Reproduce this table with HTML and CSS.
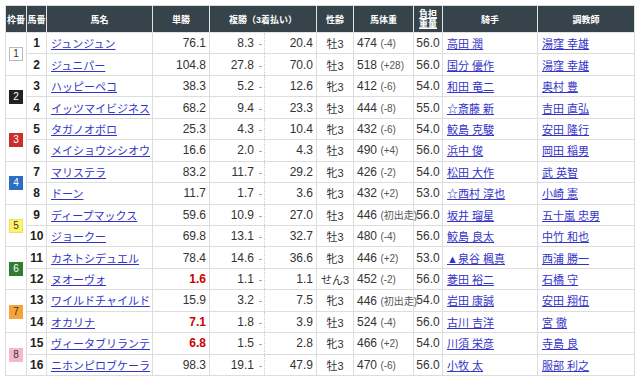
FILE: index.html
```html
<!DOCTYPE html>
<html lang="ja">
  <head>
    <meta charset="UTF-8">
    <title>出馬表</title>
    <link rel="stylesheet" href="styles.css">
  </head>
  <body>
    <table class="race-table">
      <colgroup>
        <col class="c-waku"><col class="c-num"><col class="c-name"><col class="c-win">
        <col class="c-place-lo"><col class="c-place-hi"><col class="c-sex"><col class="c-weight">
        <col class="c-load"><col class="c-jockey"><col class="c-trainer">
      </colgroup>
      <thead>
        <tr>
          <th>枠番</th>
          <th>馬番</th>
          <th>馬名</th>
          <th>単勝</th>
          <th colspan="2">複勝（3着払い）</th>
          <th>性齢</th>
          <th>馬体重</th>
          <th class="load-head"><span>負担<br>重量</span></th>
          <th>騎手</th>
          <th>調教師</th>
        </tr>
      </thead>
      <tbody id="race-body"></tbody>
    </table>
    <script>
      // 出走馬データ
      const horses = [
        [1, 'ジュンジュン', '76.1', '8.3', '20.4', '牡3', '474', '(-4)', '56.0', '高田 潤', '湯窪 幸雄'],
        [2, 'ジュニパー', '104.8', '27.8', '70.0', '牡3', '518', '(+28)', '56.0', '国分 優作', '湯窪 幸雄'],
        [3, 'ハッピーペコ', '38.3', '5.2', '12.6', '牝3', '412', '(-6)', '54.0', '和田 竜二', '奥村 豊'],
        [4, 'イッツマイビジネス', '68.2', '9.4', '23.3', '牡3', '444', '(-8)', '55.0', '☆斎藤 新', '吉田 直弘'],
        [5, 'タガノオボロ', '25.3', '4.3', '10.4', '牝3', '432', '(-6)', '54.0', '鮫島 克駿', '安田 隆行'],
        [6, 'メイショウシシオウ', '16.6', '2.0', '4.3', '牡3', '490', '(+4)', '56.0', '浜中 俊', '岡田 稲男'],
        [7, 'マリステラ', '83.2', '11.7', '29.2', '牝3', '426', '(-2)', '54.0', '松田 大作', '武 英智'],
        [8, 'ドーン', '11.7', '1.7', '3.6', '牝3', '432', '(+2)', '53.0', '☆西村 淳也', '小崎 憲'],
        [9, 'ディープマックス', '59.6', '10.9', '27.0', '牡3', '446', '(初出走)', '56.0', '坂井 瑠星', '五十嵐 忠男'],
        [10, 'ジョークー', '69.8', '13.1', '32.7', '牡3', '480', '(-4)', '56.0', '鮫島 良太', '中竹 和也'],
        [11, 'カネトシデュエル', '78.4', '14.6', '36.6', '牝3', '446', '(+2)', '53.0', '▲泉谷 楓真', '西浦 勝一'],
        [12, 'ヌオーヴォ', '1.6', '1.1', '1.1', 'せん3', '452', '(-2)', '56.0', '菱田 裕二', '石橋 守'],
        [13, 'ワイルドチャイルド', '15.9', '3.2', '7.5', '牝3', '446', '(初出走)', '54.0', '岩田 康誠', '安田 翔伍'],
        [14, 'オカリナ', '7.1', '1.8', '3.9', '牡3', '524', '(-4)', '56.0', '古川 吉洋', '宮 徹'],
        [15, 'ヴィータブリランテ', '6.8', '1.5', '2.8', '牝3', '466', '(+2)', '54.0', '川須 栄彦', '寺島 良'],
        [16, 'ニホンピロブケーラ', '98.3', '19.1', '47.9', '牡3', '470', '(-6)', '56.0', '小牧 太', '服部 利之']
      ];

      const body = document.getElementById('race-body');
      horses.forEach(h => {
        const [num, name, win, lo, hi, sex, weight, diff, load, jockey, trainer] = h;
        const tr = document.createElement('tr');
        let waku = '';
        // 2頭ずつ同じ枠
        if (num % 2 === 1) {
          const w = (num + 1) / 2;
          waku = `<td class="waku" rowspan="2"><span class="badge w${w}">${w}</span></td>`;
        }
        const hot = parseFloat(win) < 10 ? ' hot' : '';
        tr.innerHTML = `
          ${waku}
          <td class="num">${num}</td>
          <td class="name"><a href="#">${name}</a></td>
          <td class="odds${hot}">${win}</td>
          <td class="place-lo">${lo}<span class="dash">-</span></td>
          <td class="place-hi">${hi}</td>
          <td class="sex">${sex}</td>
          <td class="weight">${weight} <small>${diff}</small></td>
          <td class="load">${load}</td>
          <td class="link"><a href="#">${jockey}</a></td>
          <td class="link"><a href="#">${trainer}</a></td>
        `;
        body.appendChild(tr);
      });
    </script>
  </body>
</html>
```

FILE: styles.css
```css
/* 出馬表 */
body {
    margin: 0;
    padding: 5px;
    background: #fff;
    font-family: "Liberation Sans", "Noto Sans CJK JP", sans-serif;
    color: #333;
}

.race-table {
    width: 629px;
    border-collapse: collapse;
    table-layout: fixed;
    border: 1px solid #ddd;
}

.c-waku { width: 21px; }
.c-num { width: 20px; }
.c-name { width: 106px; }
.c-win { width: 57px; }
.c-place-lo { width: 55px; }
.c-place-hi { width: 52px; }
.c-sex { width: 37px; }
.c-weight { width: 60px; }
.c-load { width: 29px; }
.c-jockey { width: 95px; }
.c-trainer { width: 97px; }

.race-table th {
    height: 26px;
    padding: 0;
    background: #37434a;
    color: #fff;
    font-size: 9px;
    font-weight: bold;
    text-align: center;
    border: 1px solid #e2e2e2;
    border-top: none;
    white-space: nowrap;
    overflow: hidden;
}

.race-table th.load-head span {
    display: inline-block;
    line-height: 10px;
    text-decoration: underline;
}

.race-table td {
    height: 20.44px;
    padding: 0 3px;
    border: 1px solid #ddd;
    font-size: 12px;
    white-space: nowrap;
    vertical-align: middle;
}

.race-table a {
    color: #3434c8;
    font-size: 11px;
}

.waku {
    text-align: center;
    padding: 0 !important;
}

.badge {
    display: inline-block;
    width: 12px;
    height: 12px;
    line-height: 12px;
    font-size: 10px;
    text-align: center;
    border: 1px solid #bbb;
    color: #333;
}

.w1 { background: #fff; }
.w2 { background: #222; color: #fff; border-color: #222; }
.w3 { background: #c9302c; color: #fff; border-color: #c9302c; }
.w4 { background: #2a6fc4; color: #fff; border-color: #2a6fc4; }
.w5 { background: #fff36b; border-color: #f0e060; }
.w6 { background: #2f7d32; color: #fff; border-color: #2f7d32; }
.w7 { background: #f7a33b; border-color: #f7a33b; }
.w8 { background: #f5b8ca; border-color: #f5b8ca; }

.num {
    text-align: center;
    font-weight: bold;
    color: #222;
}

.name {
    padding-left: 4px !important;
}

.odds {
    text-align: right;
}

.odds.hot {
    color: #c00;
    font-weight: bold;
}

.race-table td.place-lo {
    text-align: right;
    border-right: 1px dotted #ccc;
    padding-right: 2px;
}

.dash {
    display: inline-block;
    width: 7px;
    margin-left: 1px;
    font-size: 9px;
    text-align: right;
    color: #666;
}

.race-table td.place-hi {
    border-left: 1px dotted #ccc;
    text-align: right;
}

.sex {
    text-align: center;
    font-size: 11px !important;
}

.weight small {
    font-size: 10px;
    color: #555;
}

.load {
    text-align: center;
    padding: 0 !important;
}

.link {
    padding-left: 4px !important;
}
```
